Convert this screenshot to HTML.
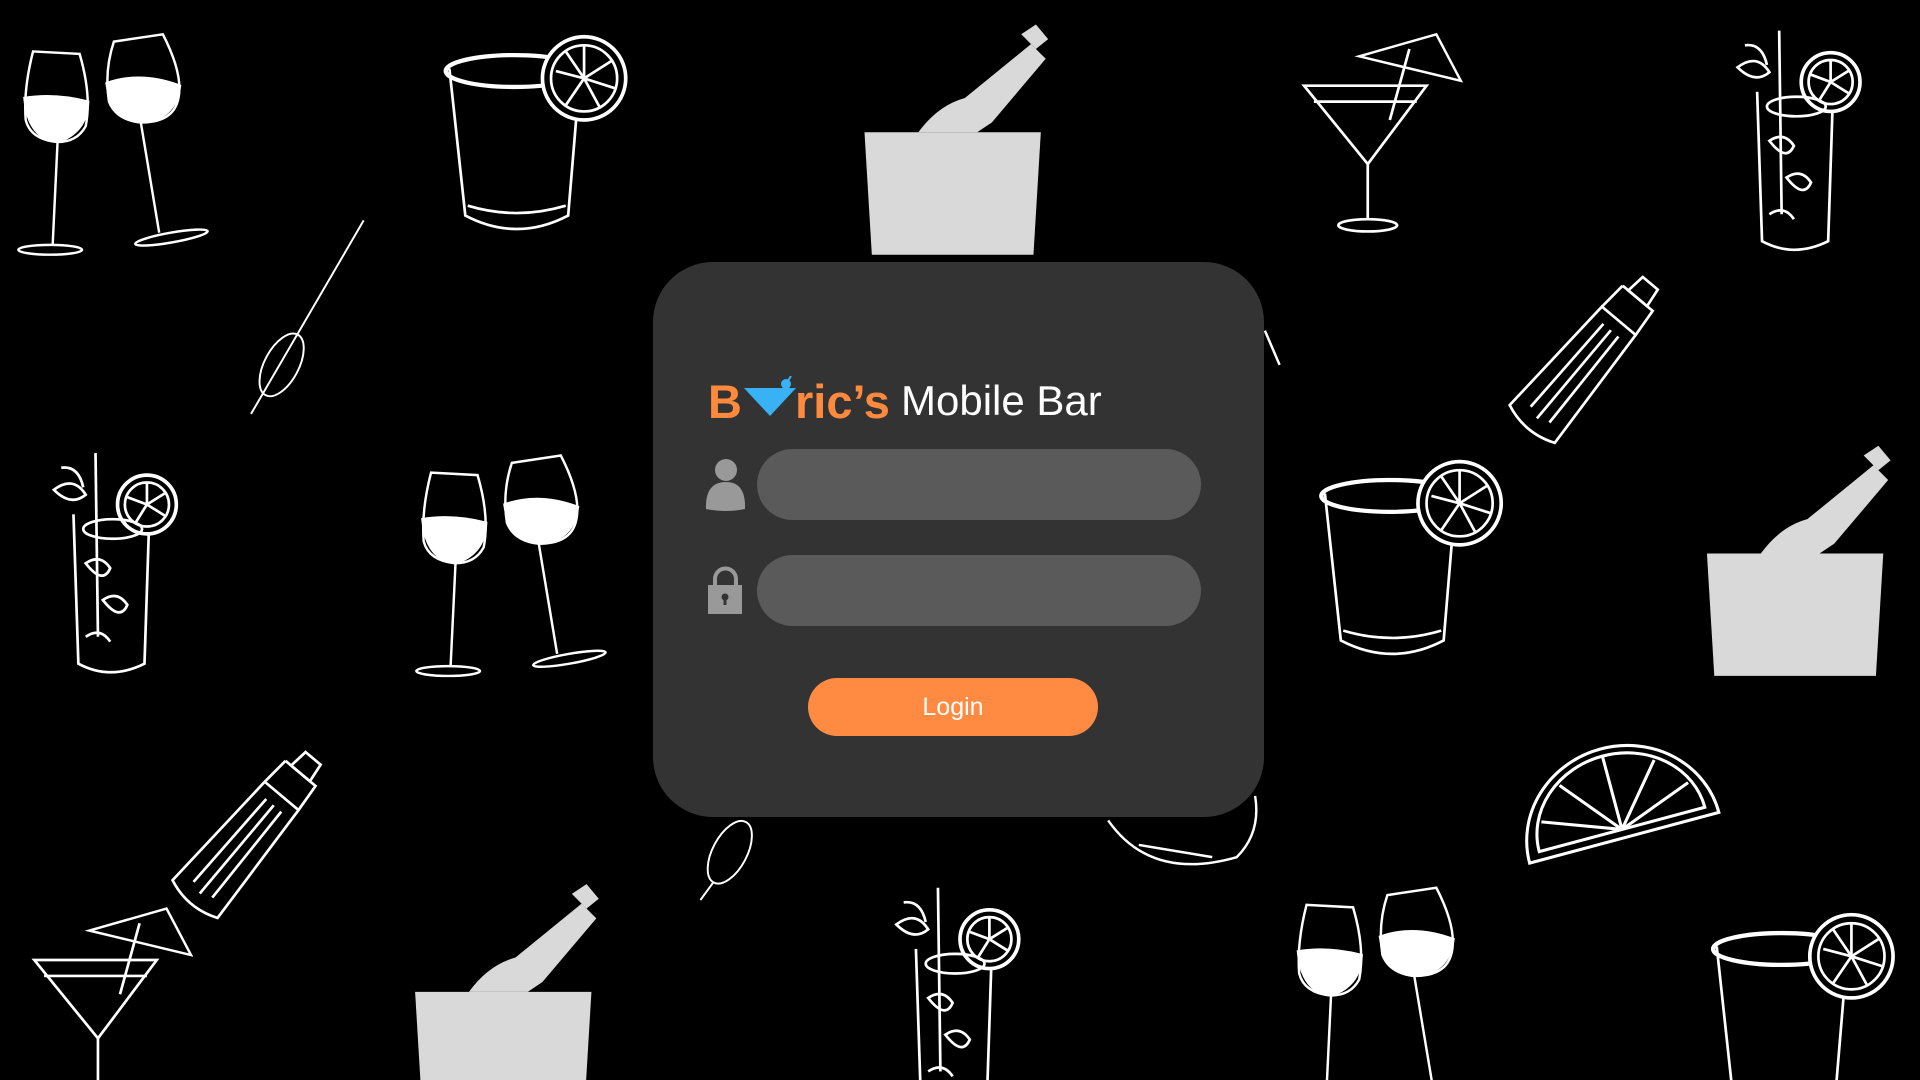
<!DOCTYPE html>
<html><head><meta charset="utf-8"><style>
html,body{margin:0;padding:0;background:#000;width:1920px;height:1080px;overflow:hidden;font-family:"Liberation Sans",sans-serif}
svg.bg{position:absolute;left:0;top:0}
.card{position:absolute;left:653px;top:262px;width:611px;height:555px;background:#333;border-radius:60px}
.t{position:absolute;white-space:nowrap;line-height:1}
.inp{position:absolute;left:757px;width:444px;height:71px;background:#5a5a5a;border-radius:36px}
.btn{position:absolute;left:808px;top:678px;width:290px;height:58px;background:#ff8a42;border-radius:29px;color:#fff;font-size:25px;text-align:center;line-height:58px}
</style></head><body>
<svg class="bg" width="1920" height="1080" viewBox="0 0 1568 882" preserveAspectRatio="none">
<defs>
<g id="wine" fill="none" stroke="#fff" stroke-width="2">
 <path d="M5,52 Q30,48 57,55 Q56,80 32,88 Q8,85 5,52Z" fill="#fff"/>
 <path d="M12,14 L50,16 Q60,50 55,75 Q48,88 32,88 Q10,86 6,70 Q4,45 12,14 Z"/>
 <path d="M32,88 L28,172"/><ellipse cx="26" cy="176" rx="26" ry="4"/>
 <path d="M72,40 Q100,30 132,42 Q128,70 100,72 Q76,70 72,40Z" fill="#fff"/>
 <path d="M78,6 L118,0 Q136,35 130,55 Q125,72 100,72 Q80,70 74,55 Q70,30 78,6Z"/>
 <path d="M100,72 L115,162"/><ellipse cx="125" cy="166" rx="30" ry="4" transform="rotate(-10 125 166)"/>
</g>
<g id="rim" fill="none" stroke="#fff" stroke-width="2.2">
 <path d="M5,28 L18,148 Q60,170 102,148 L112,28"/>
 <path d="M20,140 Q60,152 100,140"/>
 <ellipse cx="58" cy="30" rx="56" ry="13" stroke-width="3.5"/>
 <circle cx="115" cy="36" r="34" fill="#000" stroke-width="3"/>
 <circle cx="115" cy="36" r="27"/>
 <path d="M115,36 L115,10 M115,36 L137,22 M115,36 L140,44 M115,36 L128,60 M115,36 L100,58 M115,36 L92,30 M115,36 L100,14"/>
</g>
<g id="mart" fill="none" stroke="#fff" stroke-width="2.2">
 <path d="M0,42 L100,42 L52,106 Z"/><path d="M8,55 L92,55"/>
 <path d="M52,106 L52,152"/><ellipse cx="52" cy="156" rx="24" ry="5"/>
 <path d="M45,18 L108,0 L128,38 Z" stroke-width="2"/><path d="M86,12 L70,70"/>
</g>
<g id="high" fill="none" stroke="#fff" stroke-width="2.2">
 <path d="M20,50 L24,172 Q50,186 78,172 L82,50"/>
 <path d="M38,0 L40,150"/>
 <circle cx="80" cy="42" r="24" fill="#000" stroke-width="3"/><circle cx="80" cy="42" r="18"/>
 <path d="M80,42 L80,24 M80,42 L96,32 M80,42 L96,52 M80,42 L70,58 M80,42 L64,36"/>
 <path d="M4,30 Q20,18 30,34 Q18,44 4,30Z M10,12 Q24,10 28,28"/>
 <path d="M30,90 q12,-8 20,4 q-6,14 -20,-4z M44,120 q12,-8 20,4 q-6,14 -20,-4z M30,150 q12,-8 20,4"/>
 <ellipse cx="52" cy="62" rx="24" ry="8"/>
</g>
<g id="shaker" fill="none" stroke="#fff" stroke-width="2.2">
 <path d="M-18,0 L18,0 L24,110 Q0,120 -24,110 Z"/>
 <path d="M-16,-24 L16,-24 L18,0 M-16,-24 L-18,0"/>
 <path d="M-8,-40 L8,-40 L10,-24 L-10,-24Z"/>
 <path d="M-8,10 L-10,100 M8,10 L10,100 M0,10 L0,104"/>
</g>
<g id="buck">
 <path d="M0,0 L144,0 L138,100 L6,100 Z" fill="#d9d9d9"/>
 <path d="M44,0 Q60,-22 82,-28 L136,-72 L148,-60 L104,-8 L92,0 Z" fill="#d9d9d9"/>
 <path d="M128,-80 L140,-88 L150,-76 L140,-68Z" fill="#d9d9d9"/>
</g>
<g id="olive" fill="none" stroke="#fff" stroke-width="1.6">
 <path d="M92,0 L0,158"/>
 <ellipse cx="25" cy="118" rx="14" ry="28" transform="rotate(28 25 118)"/>
</g>
</defs>
<use href="#wine" x="15" y="28"/><use href="#wine" x="340" y="372"/><use href="#wine" x="1055" y="725"/>
<use href="#rim" x="362" y="28"/><use href="#rim" x="1077" y="375"/><use href="#rim" x="1397" y="745"/>
<use href="#buck" x="706" y="108"/><use href="#buck" x="1394" y="452"/><use href="#buck" x="339" y="810"/>
<use href="#mart" x="1065" y="28"/><use href="#mart" x="28" y="742"/>
<use href="#high" x="1415" y="25"/><use href="#high" x="40" y="370"/><use href="#high" x="728" y="725"/>
<g transform="translate(1322,262) rotate(40)"><use href="#shaker"/></g>
<g transform="translate(230,650) rotate(40)"><use href="#shaker"/></g>
<use href="#olive" x="205" y="180"/>
<g fill="none" stroke="#fff" stroke-width="1.6"><ellipse cx="596" cy="696" rx="14" ry="28" transform="rotate(28 596 696)"/><path d="M583,720 L572,735"/></g>
<g fill="none" stroke="#fff" stroke-width="2.5" transform="translate(1320,660) rotate(-15)">
 <path d="M-80,25 A80,75 0 0 1 80,25 Z"/><path d="M-70,18 A70,62 0 0 1 70,18 Z"/>
 <path d="M0,18 L0,-44 M0,18 L-40,-30 M0,18 L40,-30 M0,18 L-62,-5 M0,18 L62,-5"/>
</g>
<g fill="none" stroke="#fff" stroke-width="2"><path d="M905,670 Q940,720 1010,700 Q1030,680 1025,650 M930,690 L990,700"/><path d="M1033,270 L1045,298"/></g>
</svg>
<div class="card"></div>
<div class="t" style="left:708px;top:378px;font-size:47px;font-weight:bold;color:#ff8a3d">B</div>
<svg style="position:absolute;left:744px;top:376px" width="54" height="42" viewBox="0 0 54 42">
 <path d="M0,12 L52,12 L26,40 Z" fill="#38b2f5"/><circle cx="42" cy="8" r="5" fill="#38b2f5"/><path d="M42,8 L47,0" stroke="#38b2f5" stroke-width="2"/>
</svg>
<div class="t" style="left:795px;top:378px;font-size:47px;font-weight:bold;color:#ff8a3d">ric’s</div>
<div class="t" style="left:901px;top:380px;font-size:42px;color:#fff">Mobile Bar</div>
<div class="inp" style="top:449px"></div>
<div class="inp" style="top:555px"></div>
<svg style="position:absolute;left:705px;top:459px" width="42" height="52" viewBox="0 0 42 52">
 <circle cx="21" cy="11" r="11" fill="#999"/><path d="M1,50 Q0,23 21,23 Q41,23 40,50 Q21,54 1,50Z" fill="#999"/>
</svg>
<svg style="position:absolute;left:708px;top:566px" width="35" height="48" viewBox="0 0 35 48">
 <path d="M7,20 L7,13 A10.5,10.5 0 0 1 28,13 L28,20" fill="none" stroke="#999" stroke-width="4"/>
 <rect x="0" y="19" width="34" height="29" fill="#999"/><circle cx="17" cy="31" r="3.5" fill="#333"/><rect x="15.5" y="31" width="3" height="8" fill="#333"/>
</svg>
<div class="btn">Login</div>
</body></html>
